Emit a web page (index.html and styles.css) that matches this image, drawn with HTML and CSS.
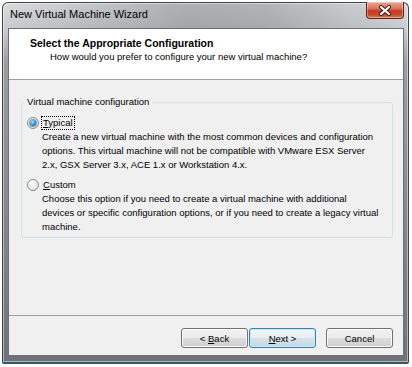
FILE: index.html
```html
<!DOCTYPE html>
<html lang="en">
<head>
    <meta charset="UTF-8">
    <title>New Virtual Machine Wizard</title>
    <link rel="stylesheet" href="styles.css">
</head>
<body>

<div class="window">
    <div class="titlebar">
        <span class="title">New Virtual Machine Wizard</span>
        <div class="close-btn">
            <svg width="14" height="11" viewBox="0 0 14 11">
                <path d="M3 2 L11 9 M11 2 L3 9" stroke="#3b1a14" stroke-width="4" stroke-linecap="round"/>
                <path d="M3 2 L11 9 M11 2 L3 9" stroke="#ffffff" stroke-width="2.2" stroke-linecap="round"/>
            </svg>
        </div>
    </div>

    <div class="client">
        <div class="wizard-header">
            <div class="wizard-title">Select the Appropriate Configuration</div>
            <div class="wizard-subtitle">How would you prefer to configure your new virtual machine?</div>
        </div>

        <div class="wizard-body">
            <fieldset class="group">
                <legend>Virtual machine configuration</legend>

                <div class="option first">
                    <span class="radio checked"></span>
                    <span class="option-label focused"><u>T</u>ypical</span>
                </div>
                <div class="option-desc">
                    Create a new virtual machine with the most common devices and configuration<br>
                    options. This virtual machine will not be compatible with VMware ESX Server<br>
                    2.x, GSX Server 3.x, ACE 1.x or Workstation 4.x.
                </div>

                <div class="option second">
                    <span class="radio"></span>
                    <span class="option-label"><u>C</u>ustom</span>
                </div>
                <div class="option-desc">
                    Choose this option if you need to create a virtual machine with additional<br>
                    devices or specific configuration options, or if you need to create a legacy virtual<br>
                    machine.
                </div>
            </fieldset>
        </div>

        <div class="wizard-footer">
            <button class="btn">&lt; <u>B</u>ack</button>
            <button class="btn btn-default"><u>N</u>ext &gt;</button>
            <button class="btn btn-cancel">Cancel</button>
        </div>
    </div>
</div>

</body>
</html>
```

FILE: styles.css
```css
body {
    margin: 0;
    padding: 0;
    background-color: #ffffff;
    font-family: "Liberation Sans", Arial, sans-serif;
    color: #000;
}

.window {
    box-sizing: border-box;
    width: 407px;
    height: 362px;
    margin: 2px 0 0 2px;
    border: 1px solid #3f4448;
    border-bottom: 2px solid #2d5a66;
    border-radius: 6px 6px 2px 2px;
    background:
        linear-gradient(to right, rgba(255,255,255,0) 0%, rgba(90,96,100,0.35) 45%, rgba(60,66,70,0.25) 65%, rgba(255,255,255,0) 100%) top / 100% 26px no-repeat,
        linear-gradient(to bottom, #dadcde 0, #c9ccce 26px, #9a9ea1 60px, #6f7377 100%);
    box-shadow: inset 0 0 0 1px rgba(255,255,255,0.45);
}

/* title bar */
.titlebar {
    display: flex;
    justify-content: space-between;
    align-items: flex-start;
    height: 25px;
}

.title {
    padding: 3px 0 0 7px;
    font-size: 11px;
    line-height: 16px;
    color: #000;
}

.close-btn {
    box-sizing: border-box;
    width: 38px;
    height: 17px;
    margin: -1px 4px 0 0;
    border: 1px solid #5e2218;
    border-top: none;
    border-radius: 0 0 4px 4px;
    background: linear-gradient(to bottom, #e8a593 0%, #d9765f 40%, #c23b22 55%, #c8492c 80%, #e07f55 100%);
    box-shadow: inset 0 0 0 1px rgba(255,255,255,0.35);
    display: flex;
    justify-content: center;
    align-items: center;
}

/* client area */
.client {
    box-sizing: border-box;
    display: flex;
    flex-direction: column;
    height: 328px;
    margin: 0 4px 0 5px;
    border: 1px solid #6b7177;
    background-color: #f0f0f0;
    font-size: 9.5px;
}

.wizard-header {
    height: 51px;
    padding: 7px 0 0 21px;
    box-sizing: border-box;
    background-color: #ffffff;
    border-bottom: 1px solid #a0a0a0;
    flex-shrink: 0;
}

.wizard-title {
    font-weight: bold;
    font-size: 10.5px;
    line-height: 14px;
}

.wizard-subtitle {
    padding-left: 20px;
    line-height: 14px;
}

.wizard-body {
    flex: 1;
    padding: 16px 10px 0 12px;
}

.group {
    margin: 0;
    padding: 0 0 3px 0;
    border: 1px solid #d5dfe5;
    border-radius: 3px;
}

.group legend {
    margin-left: 2px;
    padding: 0 3px;
    line-height: 12px;
}

.option {
    display: flex;
    align-items: center;
    height: 14px;
    padding-left: 5px;
}

.option.first {
    margin-top: 8px;
}

.option.second {
    margin-top: 6px;
}

.option-label {
    margin-left: 3px;
    padding: 0 1px;
    line-height: 12px;
}

.option-label.focused {
    outline: 1px dotted #000;
    outline-offset: 0;
}

.option-desc {
    padding-left: 20px;
    line-height: 14px;
    white-space: nowrap;
}

.radio {
    box-sizing: border-box;
    width: 12px;
    height: 12px;
    border-radius: 50%;
    border: 1px solid #8a8c8e;
    background: radial-gradient(circle at 40% 35%, #ffffff 0%, #f0f0f0 45%, #d2d3d5 100%);
    display: flex;
    justify-content: center;
    align-items: center;
    flex-shrink: 0;
}

.radio.checked::after {
    content: "";
    width: 6px;
    height: 6px;
    border-radius: 50%;
    background: radial-gradient(circle at 40% 35%, #bfe9ff 0%, #3c98d6 45%, #0d4f86 100%);
    box-shadow: 0 0 0 1px rgba(20, 70, 110, 0.5);
}

/* buttons */
.wizard-footer {
    display: flex;
    justify-content: flex-end;
    padding: 12px 10px 7px 0;
    border-top: 1px solid #a0a0a0;
    flex-shrink: 0;
}

.btn {
    box-sizing: border-box;
    width: 67px;
    height: 20px;
    margin-left: 1px;
    padding: 0;
    font-family: "Liberation Sans", Arial, sans-serif;
    font-size: 9.5px;
    color: #000;
    border: 1px solid #707070;
    border-radius: 3px;
    background: linear-gradient(to bottom, #f2f2f2 0%, #ebebeb 50%, #dddddd 50%, #cfcfcf 100%);
    box-shadow: inset 0 0 0 1px #fbfbfb;
}

.btn-default {
    border-color: #3c7fb1;
    background: linear-gradient(to bottom, #f1f6f9 0%, #e6eef3 50%, #d6e3ea 50%, #c9d8e1 100%);
    box-shadow: inset 0 0 0 1px #c2ecfb;
}

.btn-cancel {
    margin-left: 10px;
}
```
